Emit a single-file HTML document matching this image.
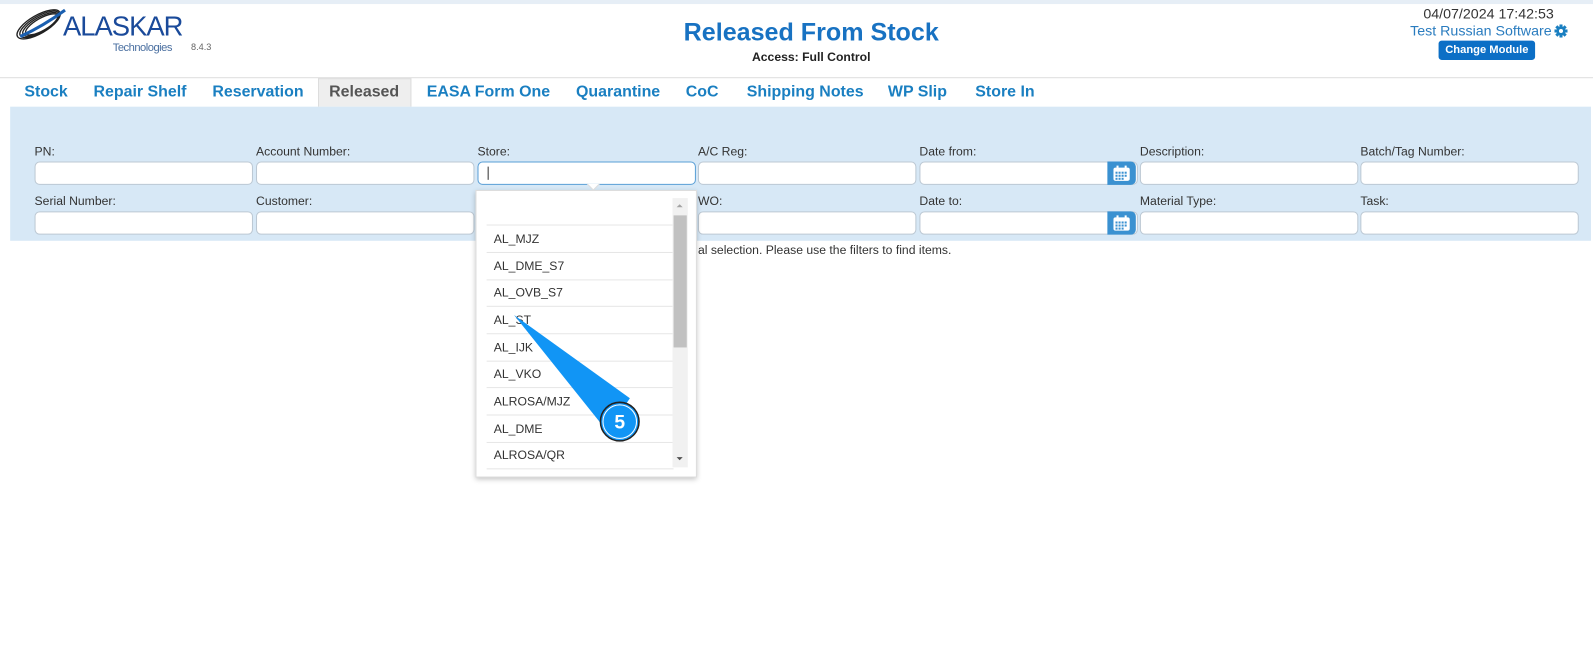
<!DOCTYPE html>
<html><head><meta charset="utf-8"><style>
*{box-sizing:border-box;margin:0;padding:0}
body{width:1593px;height:667px;background:#fff;font-family:"Liberation Sans",Arial,sans-serif;position:relative;overflow:hidden}
#w{position:absolute;left:0;top:0;width:1568px;height:657px;transform:scale(1.01594);transform-origin:0 0}
.abs{position:absolute}
.tab{position:absolute;top:82px;font-size:15.7px;font-weight:bold;color:#1a7fc1}
.lbl{position:absolute;font-size:12px;color:#333}
.inp{position:absolute;height:23px;width:215px;background:#fff;border:1px solid #bcc8d3;border-radius:5px}
.cal{position:absolute;width:28px;height:23px;background:#3a91d1;border-radius:0 5px 5px 0}
.item{position:absolute;left:17px;font-size:12px;color:#333}
.sep{position:absolute;left:10px;width:184px;height:1px;background:#e6e6e6}
</style></head><body><div id="w">
<div class="abs" style="left:0;top:0;width:1568px;height:4px;background:#e6eef6"></div>
<svg class="abs" style="left:12px;top:6px" width="60" height="36" viewBox="0 0 60 36">
<g fill="none" stroke="#222" stroke-width="1.3">
<ellipse cx="26" cy="18" rx="24" ry="9" transform="rotate(-30 26 18)"/>
<ellipse cx="27" cy="18" rx="22" ry="8" transform="rotate(-30 27 18)"/>
<ellipse cx="28" cy="18" rx="20" ry="7" transform="rotate(-30 28 18)"/>
<ellipse cx="29" cy="18" rx="18" ry="6" transform="rotate(-30 29 18)"/>
</g>
<path d="M8 30 Q30 20 52 4" stroke="#1a5fb0" stroke-width="3" fill="none"/>
</svg>
<div class="abs" style="left:62px;top:11px;font-size:27px;color:#1a4a9a;letter-spacing:-1px">ALASKAR</div>
<div class="abs" style="left:111px;top:41px;font-size:11px;color:#4a6fa0;letter-spacing:-.5px">Technologies</div>
<div class="abs" style="left:188px;top:41px;font-size:9px;color:#666">8.4.3</div>
<div class="abs" style="left:0;width:1597px;top:19px;text-align:center;font-size:24.7px;font-weight:bold;color:#1872c2">Released From Stock</div>
<div class="abs" style="left:0;width:1597px;top:49px;text-align:center;font-size:12px;font-weight:bold;color:#222">Access: Full Control</div>
<div class="abs" style="left:1401px;top:5px;font-size:14px;color:#333">04/07/2024 17:42:53</div>
<div class="abs" style="left:1388px;top:22px;font-size:14px;color:#2a7cbf">Test Russian Software</div>
<svg class="abs" style="left:1530px;top:24px" width="13" height="13" viewBox="0 0 13 13"><g fill="#1a7fc1"><circle cx="6.5" cy="6.5" r="4.5"/><rect x="5" y="0" width="3" height="13"/><rect x="0" y="5" width="13" height="3"/><rect x="5" y="0" width="3" height="13" transform="rotate(45 6.5 6.5)"/><rect x="5" y="0" width="3" height="13" transform="rotate(-45 6.5 6.5)"/></g><circle cx="6.5" cy="6.5" r="2" fill="#fff"/></svg>
<div class="abs" style="left:1416px;top:40px;width:95px;height:19px;background:#0c6fc6;border-radius:3px;color:#fff;font-size:11px;font-weight:bold;text-align:center;line-height:19px">Change Module</div>
<div class="abs" style="left:0;top:76px;width:1568px;height:1px;background:#ddd"></div>
<div class="abs" style="left:313px;top:77px;width:92px;height:28px;background:#eee;border:1px solid #ddd;border-bottom:none"></div>
<div class="tab" style="left:24px">Stock</div>
<div class="tab" style="left:92px">Repair Shelf</div>
<div class="tab" style="left:209px">Reservation</div>
<div class="tab" style="left:324px;color:#555">Released</div>
<div class="tab" style="left:420px">EASA Form One</div>
<div class="tab" style="left:567px">Quarantine</div>
<div class="tab" style="left:675px">CoC</div>
<div class="tab" style="left:735px">Shipping Notes</div>
<div class="tab" style="left:874px">WP Slip</div>
<div class="tab" style="left:960px">Store In</div>
<div class="abs" style="left:10px;top:105px;width:1556px;height:132px;background:#d7e8f6"></div>
<div class="lbl" style="left:34px;top:142px">PN:</div>
<div class="lbl" style="left:252px;top:142px">Account Number:</div>
<div class="lbl" style="left:470px;top:142px">Store:</div>
<div class="lbl" style="left:687px;top:142px">A/C Reg:</div>
<div class="lbl" style="left:905px;top:142px">Date from:</div>
<div class="lbl" style="left:1122px;top:142px">Description:</div>
<div class="lbl" style="left:1339px;top:142px">Batch/Tag Number:</div>
<div class="lbl" style="left:34px;top:191px">Serial Number:</div>
<div class="lbl" style="left:252px;top:191px">Customer:</div>
<div class="lbl" style="left:687px;top:191px">WO:</div>
<div class="lbl" style="left:905px;top:191px">Date to:</div>
<div class="lbl" style="left:1122px;top:191px">Material Type:</div>
<div class="lbl" style="left:1339px;top:191px">Task:</div>
<div class="inp" style="left:34px;top:159px"></div>
<div class="inp" style="left:252px;top:159px"></div>
<div class="inp" style="left:470px;top:159px;border-color:#5a9fd6"><div class="abs" style="left:9px;top:4px;width:1px;height:13px;background:#333"></div></div>
<div class="inp" style="left:687px;top:159px"></div>
<div class="inp" style="left:905px;top:159px"></div>
<div class="cal" style="left:1090px;top:159px"></div>
<div class="inp" style="left:1122px;top:159px"></div>
<div class="inp" style="left:1339px;top:159px"></div>
<div class="inp" style="left:34px;top:208px"></div>
<div class="inp" style="left:252px;top:208px"></div>
<div class="inp" style="left:687px;top:208px"></div>
<div class="inp" style="left:905px;top:208px"></div>
<div class="cal" style="left:1090px;top:208px"></div>
<div class="inp" style="left:1122px;top:208px"></div>
<div class="inp" style="left:1339px;top:208px"></div>
<svg class="abs" style="left:1094px;top:162px" width="20" height="18"><rect x="2" y="3" width="16" height="13" rx="2" fill="#fff"/><g fill="#3a91d1"><rect x="4" y="7" width="2" height="2"/><rect x="7" y="7" width="2" height="2"/><rect x="10" y="7" width="2" height="2"/><rect x="13" y="7" width="2" height="2"/><rect x="4" y="10" width="2" height="2"/><rect x="7" y="10" width="2" height="2"/><rect x="10" y="10" width="2" height="2"/><rect x="13" y="10" width="2" height="2"/><rect x="4" y="13" width="2" height="2"/><rect x="7" y="13" width="2" height="2"/><rect x="10" y="13" width="2" height="2"/></g><rect x="5" y="1" width="2" height="4" fill="#fff"/><rect x="13" y="1" width="2" height="4" fill="#fff"/></svg>
<svg class="abs" style="left:1094px;top:211px" width="20" height="18"><rect x="2" y="3" width="16" height="13" rx="2" fill="#fff"/><g fill="#3a91d1"><rect x="4" y="7" width="2" height="2"/><rect x="7" y="7" width="2" height="2"/><rect x="10" y="7" width="2" height="2"/><rect x="13" y="7" width="2" height="2"/><rect x="4" y="10" width="2" height="2"/><rect x="7" y="10" width="2" height="2"/><rect x="10" y="10" width="2" height="2"/><rect x="13" y="10" width="2" height="2"/><rect x="4" y="13" width="2" height="2"/><rect x="7" y="13" width="2" height="2"/><rect x="10" y="13" width="2" height="2"/></g><rect x="5" y="1" width="2" height="4" fill="#fff"/><rect x="13" y="1" width="2" height="4" fill="#fff"/></svg>
<div class="abs" style="left:687px;top:239px;font-size:12px;color:#333">al selection. Please use the filters to find items.</div>
<div class="abs" style="left:468px;top:187px;width:218px;height:283px;background:#fff;border:1px solid #ddd;box-shadow:0 2px 5px rgba(0,0,0,.25)">
<div class="sep" style="top:33px"></div>
<div class="sep" style="top:60px"></div>
<div class="sep" style="top:87px"></div>
<div class="sep" style="top:113px"></div>
<div class="sep" style="top:140px"></div>
<div class="sep" style="top:167px"></div>
<div class="sep" style="top:193px"></div>
<div class="sep" style="top:220px"></div>
<div class="sep" style="top:247px"></div>
<div class="sep" style="top:273px"></div>
<div class="item" style="top:40px">AL_MJZ</div>
<div class="item" style="top:67px">AL_DME_S7</div>
<div class="item" style="top:93px">AL_OVB_S7</div>
<div class="item" style="top:120px">AL_ST</div>
<div class="item" style="top:147px">AL_IJK</div>
<div class="item" style="top:173px">AL_VKO</div>
<div class="item" style="top:200px">ALROSA/MJZ</div>
<div class="item" style="top:227px">AL_DME</div>
<div class="item" style="top:253px">ALROSA/QR</div>
<div class="abs" style="left:193px;top:7px;width:15px;height:265px;background:#f1f1f1"></div>
<div class="abs" style="left:194px;top:24px;width:13px;height:130px;background:#c1c1c1"></div>
<div class="abs" style="left:197px;top:13px;width:0;height:0;border:3.5px solid transparent;border-bottom-color:#a3a3a3;border-top:none"></div>
<div class="abs" style="left:197px;top:262px;width:0;height:0;border:3.5px solid transparent;border-top-color:#505050;border-bottom:none"></div>
</div>
<svg class="abs" style="left:0;top:0" width="1568" height="657">
<path d="M578 181 L584 187 L590 181" fill="#fff" stroke="#ddd"/>
<path d="M506 310 L620 392 L598 425 Z" fill="#1195f5"/>
<circle cx="610" cy="415" r="19" fill="#1195f5" stroke="#222" stroke-width="1.5"/>
<circle cx="610" cy="415" r="16.5" fill="none" stroke="#fff" stroke-width="1"/>
<text x="610" y="422" text-anchor="middle" font-family="Liberation Sans" font-weight="bold" font-size="19" fill="#fff">5</text>
</svg>
</div></body></html>
